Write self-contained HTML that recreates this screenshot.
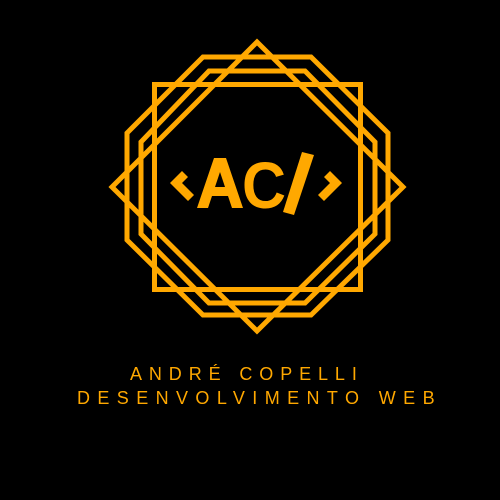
<!DOCTYPE html>
<html><head><style>
body{margin:0;background:#000;width:500px;height:500px;overflow:hidden;position:relative;font-family:"Liberation Sans",sans-serif;}
.t{position:absolute;color:#FFA800;font-size:18px;white-space:nowrap;}
</style></head><body>
<svg width="500" height="500" style="position:absolute;left:0;top:0">
<g fill="none" stroke="#FFA800" stroke-width="5" stroke-linejoin="miter">
<rect x="154.5" y="84.5" width="206" height="205"/>
<polygon points="257,42 403,187 257,331 112,187"/>
<polygon points="203,57 311,57 388,133 388,240 311,315 203,315 127,240 127,133"/>
<polygon points="209,71 305,71 375,142 375,234 305,303 209,303 141,234 141,142"/>
</g>
<g fill="#FFA800">
<polygon points="170,183 182,171 188,177 182,183 194,195 188,201"/>
<polygon points="342,183 330,171 324,177 330,183 318,195 324,201"/>
<polygon points="197,208 214,158 226,158 243,208 232,208 228,196 212,196 208,208"/>
<polygon points="302,152 314,155 294,215 283,212"/>
</g>
<polygon points="215,187 225,187 220,172" fill="#000"/>
<text x="242" y="208" fill="#FFA800" font-family="Liberation Sans" font-weight="bold" font-size="66" textLength="44" lengthAdjust="spacingAndGlyphs">C</text>
</svg>
<div class="t" style="left:130px;top:364px;letter-spacing:6.9px">ANDRÉ COPELLI</div>
<div class="t" style="left:77px;top:388px;letter-spacing:7.4px">DESENVOLVIMENTO WEB</div>
</body></html>
